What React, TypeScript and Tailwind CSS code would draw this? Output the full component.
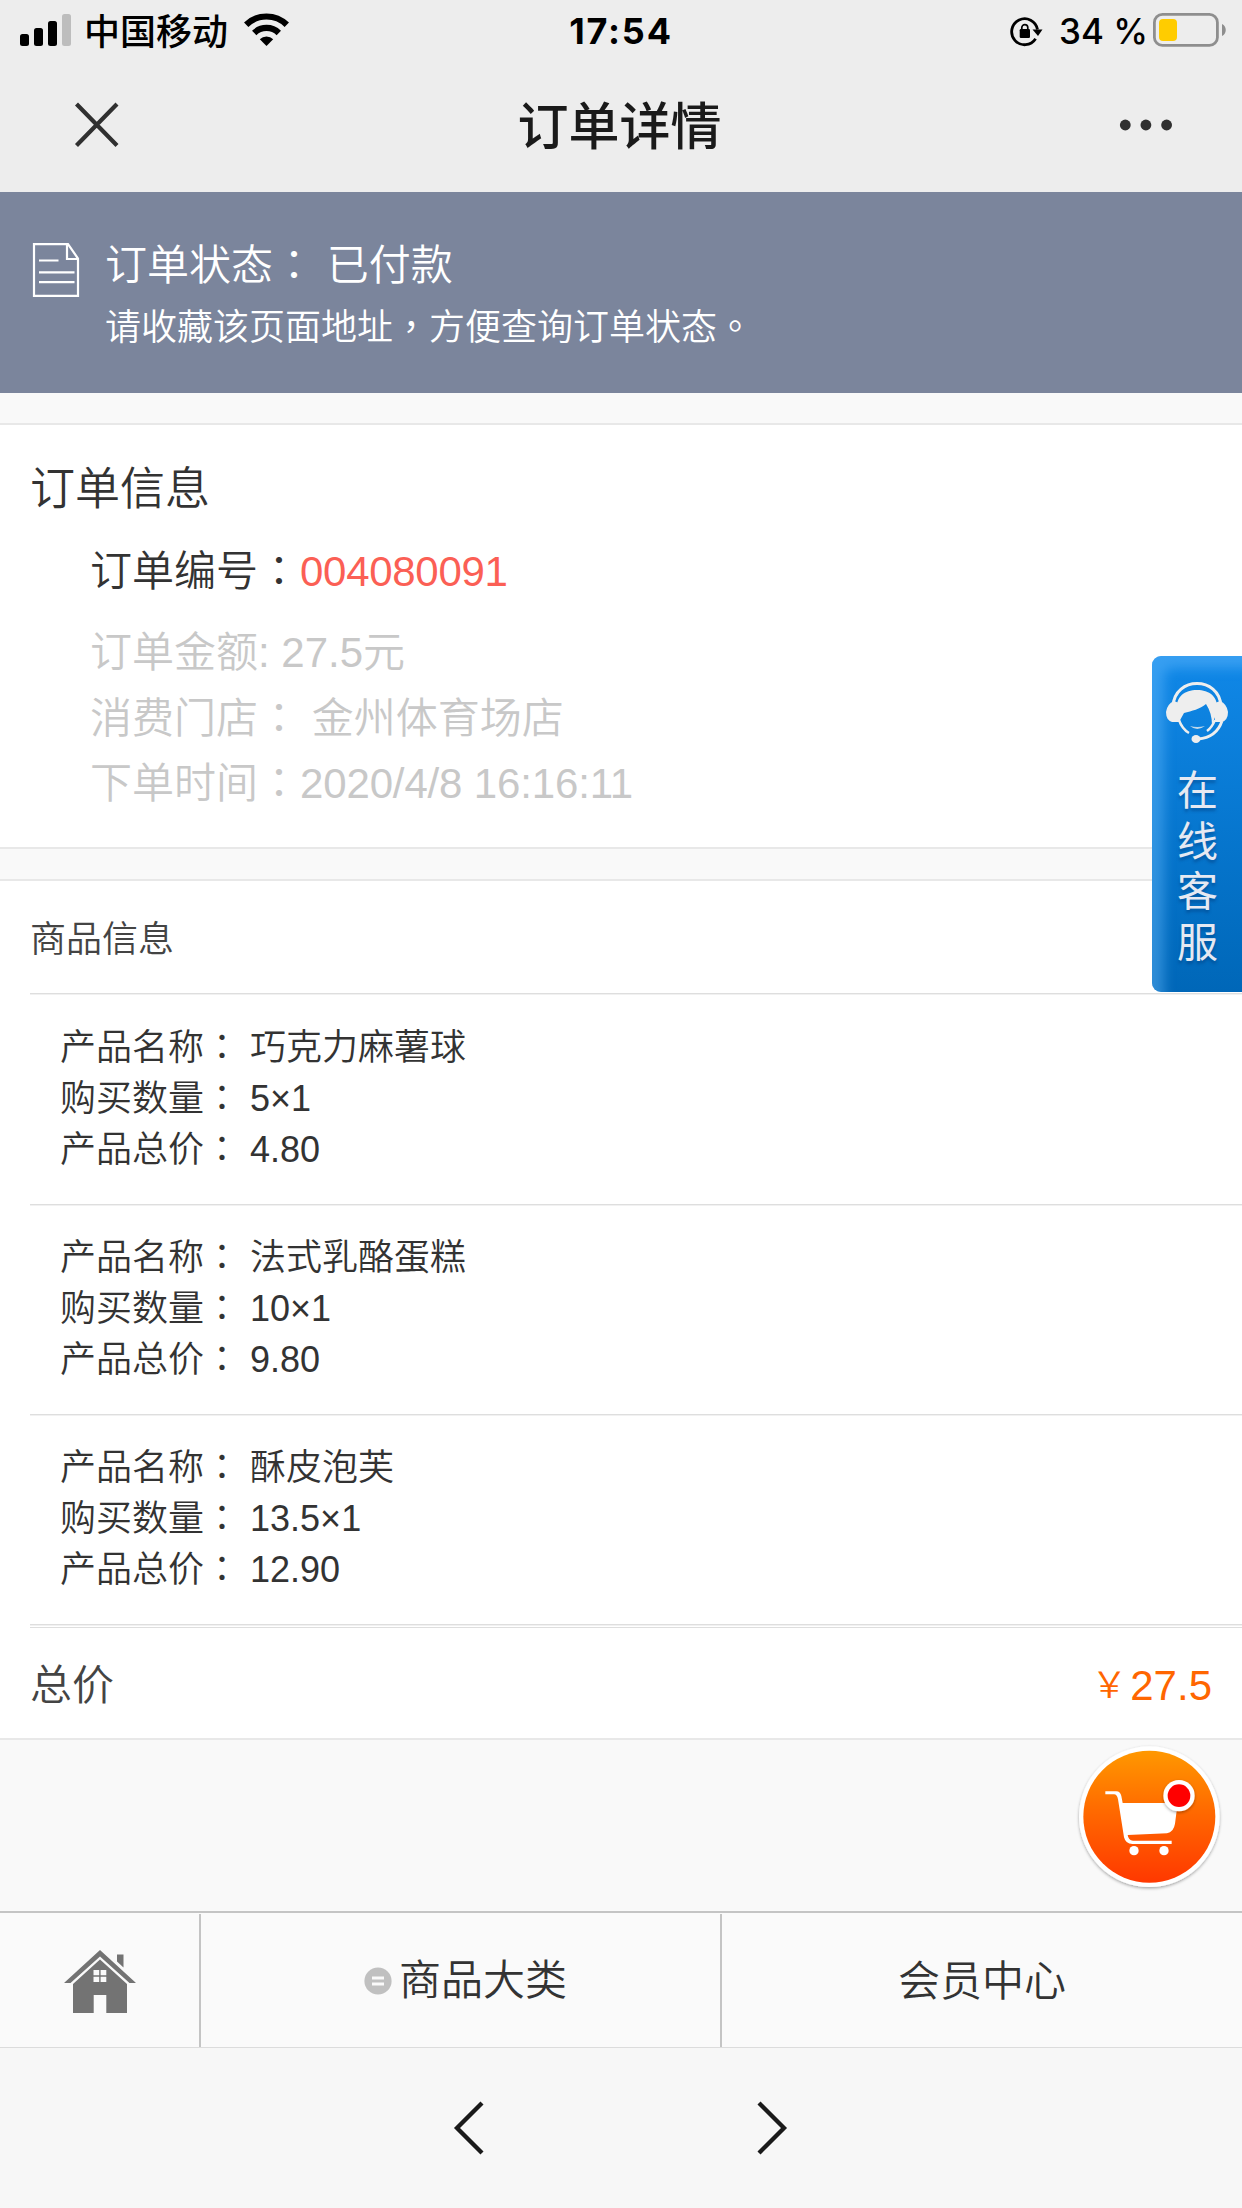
import type { ReactNode } from 'react'

const PRODUCTS = [
  { name: '巧克力麻薯球', amount: '5×1', price: '4.80' },
  { name: '法式乳酪蛋糕', amount: '10×1', price: '9.80' },
  { name: '酥皮泡芙', amount: '13.5×1', price: '12.90' },
]

// punctuation centered in its em box
function Punct({ children }: { children: ReactNode }) {
  return (
    <span lang="zh-TW" className="font-['Liberation_Sans','Noto_Sans_CJK_TC',sans-serif]">
      {children}
    </span>
  )
}

function StatusBar() {
  return (
    <div className="flex h-[60px] items-start justify-between pl-5 pr-4 text-black">
      <div className="flex items-start">
        <svg className="mt-[14px]" width="51" height="32" viewBox="0 0 51 32">
          <rect x="0" y="20" width="9" height="12" rx="2.5" />
          <rect x="14" y="14" width="9" height="18" rx="2.5" />
          <rect x="28" y="7" width="9" height="25" rx="2.5" />
          <rect x="42" y="0" width="9" height="32" rx="2.5" fill="#bdbdbd" />
        </svg>
        <span className="ml-[13px] mt-[3px] text-[36px] font-medium leading-[60px]">中国移动</span>
        <svg className="ml-4 mt-[13px]" width="45" height="33" viewBox="0 0 45 33">
          <path d="M2.2 11.8 A29 29 0 0 1 42.8 11.8" fill="none" stroke="#000" strokeWidth="6.2" />
          <path d="M10.2 20 A17.5 17.5 0 0 1 34.8 20" fill="none" stroke="#000" strokeWidth="6.2" />
          <path d="M22.5 33 L15.8 26.3 A9.5 9.5 0 0 1 29.2 26.3 Z" />
        </svg>
      </div>
      <div className="flex items-start">
        <svg className="mt-[17px]" width="33" height="30" viewBox="0 0 33 30">
          <path d="M27.5 12.5 A13 13 0 1 0 25.6 21.8" fill="none" stroke="#000" strokeWidth="2.8" />
          <path d="M22.5 12.5 H32.5 L28 19 Z" />
          <rect x="9.7" y="12" width="10.3" height="9" rx="1.2" />
          <path d="M11.8 13 V10.6 a3 3 0 0 1 6 0 V13" fill="none" stroke="#000" strokeWidth="1.7" />
        </svg>
        <span className="ml-4 mt-[1px] w-[94px] whitespace-nowrap font-['Inter',sans-serif] text-[35px] font-[550] leading-[60px]">
          34 %
        </span>
        <svg className="mt-[13px]" width="73" height="34" viewBox="0 0 73 34">
          <rect x="1.4" y="1.4" width="63" height="31" rx="8" fill="none" stroke="#8e8e8e" strokeWidth="2.8" />
          <rect x="6" y="6" width="18" height="22" rx="4" fill="#ffcc00" />
          <path d="M69 11 c5 2 5 10 0 12 Z" fill="#8e8e8e" />
        </svg>
      </div>
    </div>
  )
}

function TitleBar() {
  return (
    <div className="flex h-[132px] items-start justify-between pl-[74px] pr-[69px]">
      <svg className="mt-[42px]" width="46" height="46" viewBox="0 0 46 46">
        <path d="M2.5 2 L43 43.5 M43 2 L2.5 43.5" stroke="#303030" strokeWidth="4.2" />
      </svg>
      <h1 className="mt-[18px] text-[51px] font-medium leading-[100px] text-[#1a1a1a]">订单详情</h1>
      <svg className="mt-[59px]" width="54" height="12" viewBox="0 0 54 12">
        <circle cx="6.3" cy="6" r="5.4" fill="#303030" />
        <circle cx="26.9" cy="6" r="5.4" fill="#303030" />
        <circle cx="47.6" cy="6" r="5.4" fill="#303030" />
      </svg>
    </div>
  )
}

function StatusBanner() {
  return (
    <div className="flex h-[201px] bg-[#7b859c] pl-[32px] pt-[43px] text-white">
      <svg className="mt-[8px]" width="48" height="54" viewBox="0 0 48 54" fill="none" stroke="#fff" strokeWidth="2.2">
        <path d="M2 1.1 H36 L46 15.5 V52.9 H2 Z" />
        <path d="M35 1 V16 H46" />
        <path d="M7 17.5 H26.5 M7 29.3 H42.5 M7 39.2 H42.5" />
      </svg>
      <div className="ml-[25px] leading-[62px]">
        <p className="text-[42px]">
          订单状态<Punct>：</Punct> 已付款
        </p>
        <p className="text-[36px]">
          请收藏该页面地址<Punct>，</Punct>方便查询订单状态<Punct>。</Punct>
        </p>
      </div>
    </div>
  )
}

function OrderInfo() {
  return (
    <section className="mt-[30px] h-[426px] border-y-2 border-[#e8e8e8] bg-white pt-[35px]">
      <h2 className="pl-[30px] text-[45px] leading-[60px] text-[#333]">订单信息</h2>
      <div className="pl-[90px] text-[42px]">
        <p className="mt-[21px] leading-[62px] text-[#333]">
          订单编号<Punct>：</Punct>
          <span className="tracking-[-0.3px] text-[#fb5f55]">004080091</span>
        </p>
        <div className="mt-[17px] leading-[65.5px] text-[#c8c8c8]">
          <p>订单金额: 27.5元</p>
          <p>消费门店<Punct>：</Punct> 金州体育场店</p>
          <p>
            下单时间<Punct>：</Punct>
            <span className="tracking-[-0.15px]">2020/4/8 16:16:11</span>
          </p>
        </div>
      </div>
    </section>
  )
}

function Products() {
  return (
    <section className="mt-[30px] h-[861px] border-y-2 border-[#e8e8e8] bg-white pl-[30px]">
      <h2 className="mb-px h-[113px] border-b border-[#dedede] pt-[3px] text-[36px] leading-[112px] text-[#444] shadow-[0_1px_0_#f1f1f1]">
        商品信息
      </h2>
      {PRODUCTS.map(p => (
        <div
          key={p.name}
          className="h-[210px] border-b border-[#dedede] pl-[30px] pt-[27px] text-[36px] leading-[51px] text-[#333] shadow-[0_1px_0_#f1f1f1]"
        >
          <p>产品名称<Punct>：</Punct> {p.name}</p>
          <p>购买数量<Punct>：</Punct> {p.amount}</p>
          <p>产品总价<Punct>：</Punct> {p.price}</p>
        </div>
      ))}
      <div className="mt-[2px] flex justify-between border-t border-[#dedede] pr-[30px] pt-[4px] text-[42px] leading-[108px]">
        <span className="text-[#444]">总价</span>
        <span className="flex text-[#ff6600]">
          <span className="w-[42px] text-center text-[36px]">￥</span>
          27.5
        </span>
      </div>
    </section>
  )
}

function BottomNav() {
  return (
    <nav className="flex h-[137px] border-b border-t-2 border-b-[#dcdcdc] border-t-[#c4c4c4] bg-[#fafafa] pt-px text-[42px] leading-[135px] text-[#333]">
      <div className="flex w-[201px] justify-center border-r-2 border-[#c4c4c4]">
        <svg className="mt-[36px]" width="72" height="64" viewBox="0 0 72 64" fill="#737373">
          <path d="M36 0 L72 33 H65.5 L36 6.5 L6.5 33 H0 Z" />
          <path d="M53 4.5 H59.5 V17.5 L53 11.5 Z" />
          <path d="M36 9.5 L63 34 V63 H42.3 V45 H29.7 V63 H9 V34 Z" />
          <path d="M29.5 20 h5.7 v5.3 h-5.7 Z M36.6 20 h5.7 v5.3 h-5.7 Z M29.5 26.7 h5.7 v5.3 h-5.7 Z M36.6 26.7 h5.7 v5.3 h-5.7 Z" fill="#fafafa" />
        </svg>
      </div>
      <div className="flex w-[521px] items-center justify-center border-r-2 border-[#c4c4c4] pl-[10px]">
        <svg className="mr-[7px]" width="28" height="28" viewBox="0 0 28 28">
          <circle cx="14" cy="14" r="13.6" fill="#c0c0c0" />
          <path d="M8 11 H20 M8 17 H20" stroke="#fafafa" strokeWidth="3" />
        </svg>
        <span>商品大类</span>
      </div>
      <div className="flex-1 text-center">会员中心</div>
    </nav>
  )
}

function Toolbar() {
  return (
    <div className="flex h-[160px] justify-center gap-[272px] bg-[#f7f7f7] pt-[52px]">
      <svg width="32" height="56" viewBox="0 0 32 56" fill="none">
        <path d="M29 3 L4 28 L29 53" stroke="#1a1a1a" strokeWidth="4.3" />
      </svg>
      <svg width="32" height="56" viewBox="0 0 32 56" fill="none">
        <path d="M2 3 L27 28 L2 53" stroke="#1a1a1a" strokeWidth="4.3" />
      </svg>
    </div>
  )
}

function ServiceTab() {
  return (
    <div className="absolute right-0 top-[656px] flex h-[336px] w-[90px] flex-col items-center overflow-hidden rounded-l-[9px] bg-linear-to-b from-[#1088e8] to-[#0067b8] pt-[26px] shadow-[inset_12px_12px_12px_rgba(110,190,255,0.42)]">
      <svg width="62" height="62" viewBox="0 0 62 62">
        <path d="M7 24 C9 -6 53 -6 55 24" fill="none" stroke="#eee" strokeWidth="3" />
        <path d="M11 30 C9 14 19 8 31 8 C43 8 53 14 51 30 L46 43 C46 35 44 28 40 22 C34 27 26 29 18 31 L13 40 Z" fill="#eee" />
        <path d="M8 19 L13 21 V40 H6 Q0 38 0 30 Q1 22 8 19 Z" fill="#eee" />
        <path d="M54 19 L49 21 V40 H56 Q62 38 62 30 Q61 22 54 19 Z" fill="#eee" />
        <path d="M13 38 C15 44 18 48 23 51 M49 38 C47 43 45 46 41 49" fill="none" stroke="#eee" strokeWidth="2.4" />
        <path d="M24 44 Q31 50 39 44 Q31 46 24 44 Z" fill="#eee" fillOpacity="0.8" />
        <path d="M56 39 C52 51 44 56 32 57" fill="none" stroke="#eee" strokeWidth="2.8" />
        <ellipse cx="30" cy="57" rx="4.5" ry="4" fill="#eee" />
      </svg>
      <div className="ml-px mt-[22px] flex flex-col text-[41px] font-normal leading-[50.5px] text-[#e6e9f2] [text-shadow:0_3px_3px_rgba(0,50,110,0.4)]">
        <span>在</span>
        <span>线</span>
        <span>客</span>
        <span>服</span>
      </div>
    </div>
  )
}

function CartButton() {
  return (
    <svg className="absolute left-[1075px] top-[1741.7px]" width="150" height="150" viewBox="0 0 450 450">
      <defs>
        <linearGradient id="cart" x1="0" y1="0" x2="0" y2="1">
          <stop offset="0" stopColor="#ff9800" />
          <stop offset="0.45" stopColor="#ff6a00" />
          <stop offset="1" stopColor="#ff3800" />
        </linearGradient>
        <filter id="shadow" x="-10%" y="-10%" width="120%" height="120%">
          <feDropShadow dx="0" dy="4" stdDeviation="4" floodColor="#000" floodOpacity="0.35" />
        </filter>
      </defs>
      <circle cx="223" cy="224" r="211" fill="#fff" filter="url(#shadow)" />
      <circle cx="223" cy="224" r="198" fill="url(#cart)" />
      <path
        fill="#fff"
        d="M91 148 H124 Q136 148 139 162 L143 183 H308 L300 245 Q296 270 276 274 L158 279 Q160 295 174 296 H290 V306 H172 Q152 306 147 286 L129 172 Q126 157 117 157 H91 Z"
      />
      <circle cx="177" cy="326" r="14" fill="#fff" />
      <circle cx="267" cy="326" r="14" fill="#fff" />
      <circle cx="312" cy="161" r="47" fill="#fff" filter="url(#shadow)" />
      <circle cx="312" cy="161" r="34" fill="#f00" />
    </svg>
  )
}

export default function App() {
  return (
    <div
      lang="zh-CN"
      className="relative h-[2208px] w-[1242px] overflow-hidden bg-[#f9f9f9] font-['Liberation_Sans','Noto_Sans_CJK_SC',sans-serif] font-[350]"
    >
      <header className="bg-[#ededed]">
        <StatusBar />
        <TitleBar />
      </header>
      <StatusBanner />
      <OrderInfo />
      <Products />
      <div className="h-[171px]" />
      <BottomNav />
      <Toolbar />

      <ServiceTab />
      <CartButton />
      {/* clock sits over the middle of the status bar */}
      <div className="absolute inset-x-0 top-[1px] text-center font-['Inter',sans-serif] text-[36px] font-bold leading-[60px] tracking-[1.8px] text-black">
        17:54
      </div>
    </div>
  )
}
